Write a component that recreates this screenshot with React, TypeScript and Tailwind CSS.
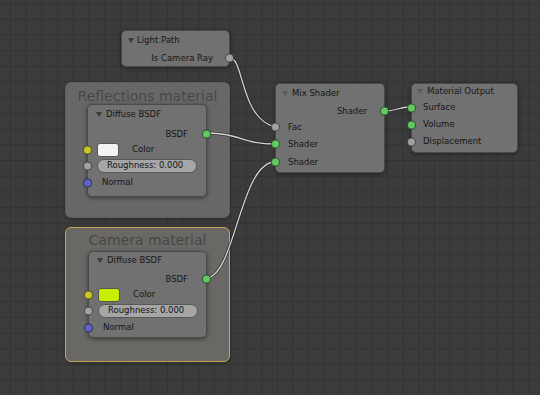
import React from "react";

const NODE =
  "absolute flex flex-col rounded-[5px] bg-[#717171] border border-[#4a4a4a] shadow-[0_1px_4px_rgba(0,0,0,0.45)] text-[#161616] text-[8.5px] leading-none font-['DejaVu_Sans',sans-serif]";

function Tri({ faint }: { faint?: boolean }) {
  return (
    <svg width="6" height="5" viewBox="0 0 6 5" className="shrink-0">
      <path d="M0 0H6L3 5Z" fill={faint ? "#5a5a5a" : "#3c3c3c"} />
    </svg>
  );
}

function Socket({ color, side }: { color: string; side: "l" | "r" }) {
  return (
    <span
      className={
        "absolute top-1/2 -translate-y-1/2 w-[9px] h-[9px] rounded-full border border-[rgba(0,0,0,0.55)] " +
        (side === "l" ? "left-[-5px] " : "right-[-5px] ") +
        color
      }
    />
  );
}

const GREEN = "bg-[#63c763]";
const YELLOW = "bg-[#c7c729]";
const GREY = "bg-[#a1a1a1]";
const PURPLE = "bg-[#6363c7]";

function Diffuse({
  cls,
  headerH,
  bottom,
  swatch,
}: {
  cls: string;
  headerH: string;
  bottom: string;
  swatch: string;
}) {
  return (
    <div className={NODE + " " + cls}>
      <div className={"flex items-center pl-[8px] gap-[4px] " + headerH}>
        <Tri />
        <span>Diffuse BSDF</span>
      </div>
      <div className="h-[2px]" />
      <div className="relative h-[16px] flex items-center justify-end pr-[18px]">
        <span>BSDF</span>
        <Socket color={GREEN} side="r" />
      </div>
      <div className="relative h-[15px] flex items-center pl-[9px]">
        <span className={"w-[22px] h-[14px] rounded-[3px] border border-[#555] " + swatch} />
        <span className="ml-[13px]">Color</span>
        <Socket color={YELLOW} side="l" />
      </div>
      <div className="relative h-[17px] flex items-center pl-[9px]">
        <div className="w-[100px] h-[14px] rounded-full bg-[#a6a6a6] border border-[#585858] flex items-center pl-[9px] text-[#111]">
          Roughness: 0.000
        </div>
        <Socket color={GREY} side="l" />
      </div>
      <div className="relative h-[17px] flex items-center pl-[14px]">
        <span>Normal</span>
        <Socket color={PURPLE} side="l" />
      </div>
      <div className={bottom} />
    </div>
  );
}

export default function App() {
  return (
    <div className="relative w-[540px] h-[395px] overflow-hidden bg-[#3b3b3b]">
      {/* grid */}
      <svg className="absolute inset-0" width="540" height="395">
        <defs>
          <pattern id="grid" x="10" y="3" width="15.7" height="15.7" patternUnits="userSpaceOnUse">
            <rect x="0" y="0" width="1" height="15.7" fill="#333333" />
            <rect x="0" y="0" width="15.7" height="1" fill="#333333" />
          </pattern>
        </defs>
        <rect width="540" height="395" fill="url(#grid)" />
      </svg>

      {/* frames */}
      <div className="absolute left-[65px] top-[82px] w-[165px] h-[136px] rounded-[6px] bg-[#676767] border border-[#5e5e5e] shadow-[0_1px_3px_rgba(0,0,0,0.3)]">
        <div className="h-[25px] flex items-center justify-center text-[14px] leading-none text-[#474747] font-['DejaVu_Sans',sans-serif]">
          Reflections material
        </div>
      </div>
      <div className="absolute left-[65px] top-[227px] w-[165px] h-[135px] rounded-[6px] bg-[#696864] border border-[#c9a45a] shadow-[0_1px_3px_rgba(0,0,0,0.3)]">
        <div className="h-[23px] flex items-center justify-center text-[14px] leading-none text-[#474747] font-['DejaVu_Sans',sans-serif]">
          Camera material
        </div>
      </div>

      {/* wires */}
      <svg className="absolute inset-0" width="540" height="395" fill="none">
        {[
          "M230,58 C244,58 240,118 275,127",
          "M206,133 C240,133 242,144 275,144",
          "M206,278 C235,278 240,162 275,162",
          "M385,111 C397,111 398,107 410,107",
        ].map((d) => (
          <g key={d}>
            <path d={d} stroke="#262626" strokeOpacity="0.75" strokeWidth="3" />
            <path d={d} stroke="#d2d2d2" strokeWidth="1.3" />
          </g>
        ))}
      </svg>

      {/* Light Path */}
      <div className={NODE + " left-[121px] top-[30px] w-[109px] h-[37px]"}>
        <div className="h-[19px] flex items-center pl-[6px] gap-[3px]">
          <Tri />
          <span>Light Path</span>
        </div>
        <div className="relative h-[16px] flex items-center justify-end pr-[16px]">
          <span>Is Camera Ray</span>
          <Socket color={GREY} side="r" />
        </div>
      </div>

      <Diffuse cls="left-[87px] top-[104px] w-[120px] h-[93px]" headerH="h-[19px]" bottom="h-[5px]" swatch="bg-[#f2f2f2]" />
      <Diffuse cls="left-[88px] top-[251px] w-[119px] h-[87px]" headerH="h-[17px]" bottom="h-[1px]" swatch="bg-[#c8ee00]" />

      {/* Mix Shader */}
      <div className={NODE + " left-[275px] top-[83px] w-[110px] h-[90px]"}>
        <div className="h-[19px] flex items-center pl-[6px] gap-[4px]">
          <Tri faint />
          <span>Mix Shader</span>
        </div>
        <div className="relative h-[16px] flex items-center justify-end pr-[17px]">
          <span>Shader</span>
          <Socket color={GREEN} side="r" />
        </div>
        <div className="relative h-[16px] flex items-center pl-[12px]">
          <span>Fac</span>
          <Socket color={GREY} side="l" />
        </div>
        <div className="relative h-[18px] flex items-center pl-[12px]">
          <span>Shader</span>
          <Socket color={GREEN} side="l" />
        </div>
        <div className="relative h-[18px] flex items-center pl-[12px]">
          <span>Shader</span>
          <Socket color={GREEN} side="l" />
        </div>
      </div>

      {/* Material Output */}
      <div className={NODE + " left-[411px] top-[83px] w-[107px] h-[70px]"}>
        <div className="h-[15px] flex items-center pl-[5px] gap-[4px]">
          <Tri faint />
          <span>Material Output</span>
        </div>
        <div className="relative h-[17px] flex items-center pl-[11px]">
          <span>Surface</span>
          <Socket color={GREEN} side="l" />
        </div>
        <div className="relative h-[17px] flex items-center pl-[11px]">
          <span>Volume</span>
          <Socket color={GREEN} side="l" />
        </div>
        <div className="relative h-[17px] flex items-center pl-[11px]">
          <span>Displacement</span>
          <Socket color={GREY} side="l" />
        </div>
      </div>
    </div>
  );
}
